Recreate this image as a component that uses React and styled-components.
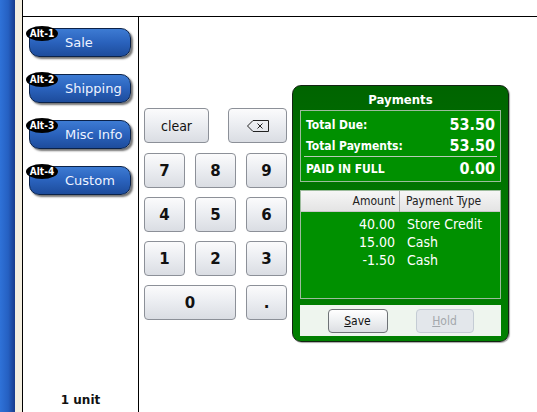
import React from "react";
import styled, { createGlobalStyle } from "styled-components";

const Global = createGlobalStyle`
  html, body { margin: 0; padding: 0; background: #fff; }
  body { font-family: "DejaVu Sans Condensed", "DejaVu Sans", sans-serif; }
  * { box-sizing: border-box; }
`;

const Screen = styled.div`
  display: flex;
  width: 537px;
  height: 412px;
  overflow: hidden;
`;

const BlueBar = styled.div`
  width: 15px;
  background: linear-gradient(to right, #2f72d8, #2560c2 55%, #1a3c8c);
`;

const CreamBar = styled.div`
  width: 7px;
  background: #f4efe1;
`;

const Main = styled.div`
  flex: 1;
  display: flex;
  flex-direction: column;
  border-left: 1px solid #000;
`;

const TopStrip = styled.div`
  height: 17px;
  border-bottom: 1px solid #000;
`;

const Body = styled.div`
  flex: 1;
  display: flex;
`;

const Sidebar = styled.div`
  width: 116px;
  border-right: 1px solid #000;
  display: flex;
  flex-direction: column;
  padding: 11px 0 5px 6px;
  gap: 17px;
`;

const NavButton = styled.div`
  position: relative;
  width: 102px;
  height: 29px;
  border: 1px solid #0b2248;
  border-radius: 10px;
  background: linear-gradient(#3d7bd3, #2a62bc 50%, #1d4c9c);
  box-shadow: 2px 2px 2px rgba(0, 0, 0, 0.55);
  color: #eef3ff;
  font-family: "DejaVu Sans", sans-serif;
  font-size: 13px;
  line-height: 28px;
  padding-left: 35px;
  white-space: nowrap;
`;

const Badge = styled.span`
  position: absolute;
  left: -4px;
  top: -3px;
  width: 32px;
  height: 15px;
  border-radius: 50%;
  background: #000;
  color: #fff;
  font-family: "DejaVu Sans Condensed", "DejaVu Sans", sans-serif;
  font-weight: bold;
  font-size: 10px;
  line-height: 15px;
  text-align: center;
`;

const UnitLabel = styled.div`
  margin-top: auto;
  margin-left: -6px;
  text-align: center;
  font-family: "DejaVu Sans", sans-serif;
  font-weight: bold;
  font-size: 12px;
  color: #111;
`;

const Workspace = styled.div`
  flex: 1;
  display: flex;
  align-items: flex-start;
  padding-left: 5px;
`;

const Keypad = styled.div`
  margin-top: 91px;
  width: 143px;
  display: flex;
  flex-direction: column;
  gap: 10px;
`;

const TopKeys = styled.div`
  display: flex;
  justify-content: space-between;
`;

const KeyGrid = styled.div`
  display: grid;
  grid-template-columns: 41px 41px 41px;
  grid-auto-rows: 35px;
  column-gap: 10px;
  row-gap: 9px;
`;

const Key = styled.button`
  width: ${(p) => p.$w || "auto"};
  height: 35px;
  grid-column: span ${(p) => p.$span || 1};
  border: 1px solid #8c9098;
  border-radius: 4px;
  background: linear-gradient(#fbfbfc, #eceef2 45%, #dadde3);
  color: #111;
  font-family: ${(p) =>
    p.$bold ? '"DejaVu Sans", sans-serif' : '"DejaVu Sans Condensed", "DejaVu Sans", sans-serif'};
  font-weight: ${(p) => (p.$bold ? "bold" : "normal")};
  font-size: ${(p) => (p.$bold ? "15px" : "14px")};
  padding: 0;
  display: flex;
  align-items: center;
  justify-content: center;
`;

const Panel = styled.div`
  margin-top: 68px;
  margin-left: 5px;
  width: 217px;
  height: 257px;
  border: 1px solid #142414;
  border-radius: 9px;
  background: linear-gradient(#006400, #007400 40%, #008000);
  box-shadow: 1px 1px 1px rgba(0, 0, 0, 0.35);
  padding: 0 7px;
  display: flex;
  flex-direction: column;
`;

const PanelTitle = styled.div`
  height: 24px;
  line-height: 28px;
  text-align: center;
  color: #fff;
  font-weight: bold;
  font-size: 13px;
`;

const Summary = styled.div`
  border: 1px solid #9cbc9c;
  background: #009000;
  height: 72px;
  padding: 3px 5px 0 5px;
  color: #fff;
`;

const SumRow = styled.div`
  display: flex;
  justify-content: space-between;
  align-items: center;
  height: 21px;
`;

const SumLabel = styled.span`
  font-weight: bold;
  font-size: 12px;
`;

const SumValue = styled.span`
  font-weight: bold;
  font-size: 16px;
`;

const Divider = styled.div`
  height: 1px;
  background: #b8ccb8;
  margin: 0 -2px 1px -2px;
`;

const TableBox = styled.div`
  margin-top: 8px;
  height: 109px;
  border: 1px solid #9cbc9c;
  background: #009000;
`;

const THead = styled.div`
  display: grid;
  grid-template-columns: 99px 1fr;
  height: 21px;
  background: linear-gradient(#f6f6f6, #e4e4e4);
  border-bottom: 1px solid #c8c8c8;
  color: #222;
  font-size: 12px;
  line-height: 21px;
`;

const THCell = styled.div`
  text-align: ${(p) => (p.$right ? "right" : "left")};
  padding: ${(p) => (p.$right ? "0 4px 0 0" : "0 0 0 6px")};
  border-right: ${(p) => (p.$right ? "1px solid #a8a8a8" : "none")};
`;

const TRows = styled.div`
  padding-top: 3px;
`;

const TRow = styled.div`
  display: grid;
  grid-template-columns: 99px 1fr;
  height: 18px;
  line-height: 18px;
  color: #fff;
  font-size: 14px;
`;

const TCell = styled.div`
  text-align: ${(p) => (p.$right ? "right" : "left")};
  padding: ${(p) => (p.$right ? "0 5px 0 0" : "0 0 0 7px")};
  white-space: nowrap;
`;

const Footer = styled.div`
  margin-top: 6px;
  height: 31px;
  background: #eef5ee;
  display: flex;
  align-items: center;
  justify-content: center;
  gap: 28px;
`;

const ActionButton = styled.button`
  width: ${(p) => p.$w}px;
  height: 24px;
  border-radius: 4px;
  border: 1px solid ${(p) => (p.$disabled ? "#c4ccd4" : "#6e7276")};
  background: ${(p) =>
    p.$disabled ? "#e3e7eb" : "linear-gradient(#ffffff, #eef0f2 50%, #dcdee2)"};
  color: ${(p) => (p.$disabled ? "#a4a8ac" : "#111")};
  font-family: "DejaVu Sans Condensed", "DejaVu Sans", sans-serif;
  font-size: 12px;
  padding: 0;
  u { text-decoration: underline; }
`;

const navItems = [
  ["Alt-1", "Sale"],
  ["Alt-2", "Shipping"],
  ["Alt-3", "Misc Info"],
  ["Alt-4", "Custom"],
];

const payments = [
  ["40.00", "Store Credit"],
  ["15.00", "Cash"],
  ["-1.50", "Cash"],
];

const BackspaceIcon = () => (
  <svg width="24" height="14" viewBox="0 0 24 14">
    <path d="M7 1.5 H22.5 V12.5 H7 L1.5 7 Z" fill="none" stroke="#222" strokeWidth="1" />
    <path d="M11.5 4.5 L16.5 9.5 M16.5 4.5 L11.5 9.5" stroke="#222" strokeWidth="1" />
  </svg>
);

export default function App() {
  return (
    <>
      <Global />
      <Screen>
        <BlueBar />
        <CreamBar />
        <Main>
          <TopStrip />
          <Body>
            <Sidebar>
              {navItems.map(([k, label]) => (
                <NavButton key={k}>
                  <Badge>{k}</Badge>
                  {label}
                </NavButton>
              ))}
              <UnitLabel>1 unit</UnitLabel>
            </Sidebar>
            <Workspace>
              <Keypad>
                <TopKeys>
                  <Key $w="65px">clear</Key>
                  <Key $w="59px">
                    <BackspaceIcon />
                  </Key>
                </TopKeys>
                <KeyGrid>
                  {["7", "8", "9", "4", "5", "6", "1", "2", "3"].map((d) => (
                    <Key key={d} $bold>
                      {d}
                    </Key>
                  ))}
                  <Key $bold $span={2}>0</Key>
                  <Key $bold>.</Key>
                </KeyGrid>
              </Keypad>
              <Panel>
                <PanelTitle>Payments</PanelTitle>
                <Summary>
                  <SumRow>
                    <SumLabel>Total Due:</SumLabel>
                    <SumValue>53.50</SumValue>
                  </SumRow>
                  <SumRow>
                    <SumLabel>Total Payments:</SumLabel>
                    <SumValue>53.50</SumValue>
                  </SumRow>
                  <Divider />
                  <SumRow>
                    <SumLabel>PAID IN FULL</SumLabel>
                    <SumValue>0.00</SumValue>
                  </SumRow>
                </Summary>
                <TableBox>
                  <THead>
                    <THCell $right>Amount</THCell>
                    <THCell>Payment Type</THCell>
                  </THead>
                  <TRows>
                    {payments.map(([amt, type], i) => (
                      <TRow key={i}>
                        <TCell $right>{amt}</TCell>
                        <TCell>{type}</TCell>
                      </TRow>
                    ))}
                  </TRows>
                </TableBox>
                <Footer>
                  <ActionButton $w={60}>
                    <u>S</u>ave
                  </ActionButton>
                  <ActionButton $w={58} $disabled>
                    <u>H</u>old
                  </ActionButton>
                </Footer>
              </Panel>
            </Workspace>
          </Body>
        </Main>
      </Screen>
    </>
  );
}
